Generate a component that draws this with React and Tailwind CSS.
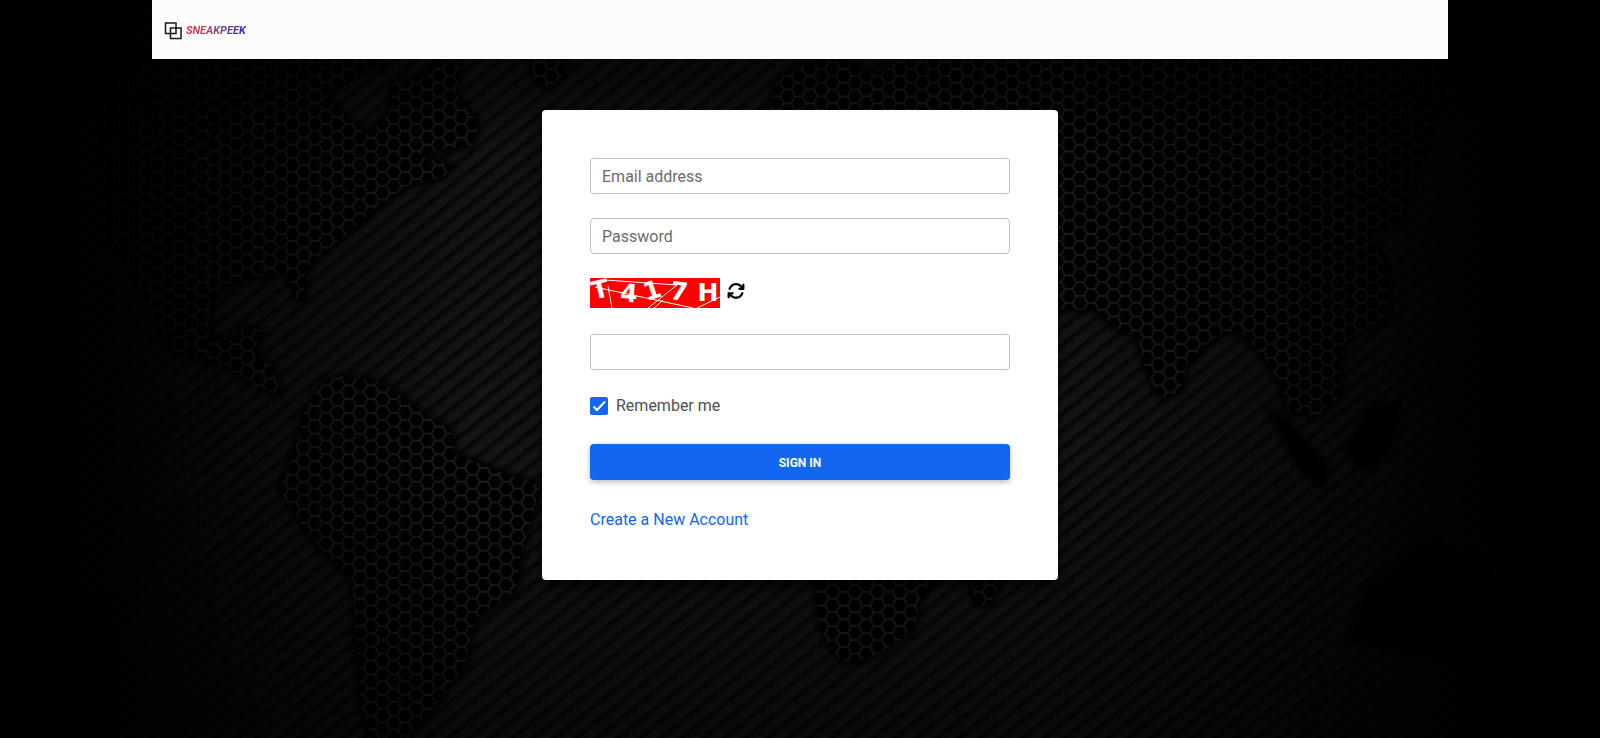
// src/pages/SignIn.jsx
//
// Sign-in page: brand bar on top, login card with captcha in the middle,
// and a dark world map drawn behind everything.

import { useState } from 'react';
import { FaArrowsRotate } from 'react-icons/fa6';

const LAND = [
  // North and Central America
  'M110 59H389L324 93L344 114L365 134L389 114L392 83L427 76L437 60L461 66L455 93L479 124L472 145L413 155L451 165L444 177L406 186L379 207L334 244L306 269L305 299L296 299L286 272L241 279L213 296L207 330L224 344L248 327L262 331L255 358L272 365L282 396L255 386L224 365L172 351L148 303L114 241L103 103Z',
  // South America
  'M304 411L322 382L340 376L383 382L401 396L429 418L451 429L454 454L490 468L540 486L536 504L522 550L515 593L476 618L465 664L440 700L415 725L408 740H372L361 707L352 579L311 539L279 489L294 454Z',
  // Greenland
  'M528 55H569L562 78L548 88L536 80Z',
  // Europe and Asia
  'M770 104L778 78L800 68L830 58L880 76L900 58H1446L1430 140L1400 224L1366 231L1387 266L1390 316L1352 337L1338 354L1341 396L1316 417L1288 410L1278 379L1264 358L1243 335L1225 331L1208 342L1187 365L1181 390L1170 397L1159 396L1145 368L1138 338L1113 326L1096 310L1050 309V120H770Z',
  // Africa and Madagascar
  'M816 570L819 623L830 648L839 659L855 663L880 653L905 637L916 623L919 601L940 570Z',
  'M970 570L975 602L987 606L996 594L1002 570Z',
];

const ISLANDS =
  'M1270 412L1284 418L1328 470L1322 486L1300 468ZM1346 450L1372 410L1398 402L1390 445L1364 470ZM1350 640L1368 590L1430 540L1490 570L1490 640L1450 655Z';

const CAPTCHA_CHARS = [
  { char: 'T', x: 10, y: 20, angle: -13 },
  { char: '4', x: 39, y: 24, angle: 4 },
  { char: '1', x: 62, y: 21, angle: -18 },
  { char: '7', x: 89, y: 22, angle: 8 },
  { char: 'H', x: 118, y: 23, angle: 0 },
];

function MapBackground() {
  return (
    <svg
      viewBox="0 0 1600 738"
      preserveAspectRatio="xMidYMid slice"
      aria-hidden="true"
      className="absolute inset-0 h-full w-full"
    >
      <defs>
        <linearGradient
          id="stripes"
          gradientUnits="userSpaceOnUse"
          x1="0"
          y1="0"
          x2="8.4"
          y2="10.4"
          spreadMethod="repeat"
        >
          <stop offset="0" stopColor="#060606" />
          <stop offset="0.35" stopColor="#141414" />
          <stop offset="0.7" stopColor="#171717" />
          <stop offset="1" stopColor="#060606" />
        </linearGradient>
        <pattern
          id="mesh"
          patternUnits="userSpaceOnUse"
          x="348.75"
          y="7"
          width="22.5"
          height="13.76"
        >
          <path
            d="M0 6.88H3.75L7.5 0H15L18.75 6.88H22.5M3.75 6.88L7.5 13.76H15L18.75 6.88"
            fill="none"
            stroke="#1f1f1f"
            strokeWidth="1.8"
          />
        </pattern>
        <linearGradient id="sideShade">
          <stop offset="0" stopColor="#000" />
          <stop offset="0.07" stopColor="#000" stopOpacity="0.9" />
          <stop offset="0.18" stopColor="#000" stopOpacity="0.45" />
          <stop offset="0.3" stopColor="#000" stopOpacity="0.05" />
          <stop offset="0.65" stopColor="#000" stopOpacity="0.05" />
          <stop offset="0.8" stopColor="#000" stopOpacity="0.45" />
          <stop offset="0.9" stopColor="#000" stopOpacity="0.85" />
          <stop offset="0.95" stopColor="#000" />
        </linearGradient>
        <linearGradient id="heightShade" x1="0" y1="0" x2="0" y2="1">
          <stop offset="0.08" stopColor="#000" stopOpacity="0.6" />
          <stop offset="0.2" stopColor="#000" stopOpacity="0.1" />
          <stop offset="0.6" stopColor="#000" stopOpacity="0" />
          <stop offset="1" stopColor="#000" stopOpacity="0.5" />
        </linearGradient>
        <filter id="soften">
          <feGaussianBlur stdDeviation="3" />
        </filter>
      </defs>

      <rect width="1600" height="738" fill="url(#stripes)" />
      <g fill="#020202" stroke="#020202" strokeWidth="6" filter="url(#soften)">
        {LAND.map((d) => (
          <path key={d} d={d} />
        ))}
        <path d={ISLANDS} />
      </g>
      {LAND.map((d) => (
        <path key={d} d={d} fill="url(#mesh)" />
      ))}
      <rect width="1600" height="738" fill="url(#sideShade)" />
      <rect width="1600" height="738" fill="url(#heightShade)" />
    </svg>
  );
}

function Logo() {
  return (
    <a href="#" aria-label="Sneakpeek home" className="flex items-center gap-1 pt-0.5">
      <svg width="18" height="18" viewBox="0 0 18 18" fill="none" stroke="#1a1a1a" strokeWidth="1.5">
        <rect x="1.5" y="1" width="10.5" height="10.5" />
        <rect x="6.5" y="6" width="10.5" height="10.5" />
      </svg>
      <span className="bg-linear-to-r from-[#ee1c25] to-[#2b1fb0] bg-clip-text text-[11px] leading-4 font-bold text-transparent italic">
        SNEAKPEEK
      </span>
    </a>
  );
}

function Captcha() {
  return (
    <svg
      width="130"
      height="30"
      viewBox="0 0 130 30"
      role="img"
      aria-label="Captcha"
      className="overflow-visible"
    >
      <rect width="130" height="30" fill="#ff0000" />
      <g
        fill="#fff"
        fontFamily="'DejaVu Sans', sans-serif"
        fontWeight="700"
        fontSize="25"
        textAnchor="middle"
      >
        {CAPTCHA_CHARS.map(({ char, x, y, angle }) => (
          <text key={char} x={x} y={y} transform={`rotate(${angle} ${x} ${y - 9})`}>
            {char}
          </text>
        ))}
      </g>
      <path
        d="M15 2L87 7L58 30M5 9L103 30M18 8L22 30M73 22L64 30M107 30L130 19"
        fill="none"
        stroke="#fff"
        strokeWidth="1"
      />
    </svg>
  );
}

function TextField({ label, showLabel = true, ...props }) {
  return (
    <input
      aria-label={label}
      placeholder={showLabel ? label : undefined}
      className="block h-9 w-full rounded border border-[#bdbdbd] bg-white px-[11px] text-base text-[#4f4f4f] outline-none placeholder:text-[#6c6c6c] focus:border-[#1266f1]"
      {...props}
    />
  );
}

function App() {
  const [remember, setRemember] = useState(true);

  return (
    <div className="relative min-h-screen bg-black font-[Roboto,sans-serif] text-base text-[#4f4f4f]">
      <MapBackground />

      <div className="relative px-3">
        <header className="mx-auto flex h-[59px] max-w-[1296px] items-center bg-[#fbfbfb] px-3">
          <Logo />
        </header>

        <main className="mx-auto mt-[51px] max-w-[516px] rounded bg-white p-12 shadow-lg shadow-black/60">
          <form onSubmit={(e) => e.preventDefault()}>
            <div className="flex flex-col gap-6">
              <TextField label="Email address" type="email" />
              <TextField label="Password" type="password" />
              <div className="flex h-8 items-start gap-[7px]">
                <Captcha />
                <button type="button" aria-label="Refresh captcha" className="mt-1 text-black">
                  <FaArrowsRotate size={18} />
                </button>
              </div>
              <TextField label="Captcha text" showLabel={false} type="text" />
              <label className="flex items-center gap-2">
                <span className="relative flex">
                  <input
                    type="checkbox"
                    checked={remember}
                    onChange={(e) => setRemember(e.target.checked)}
                    className="peer h-[18px] w-[18px] appearance-none rounded-xs border-2 border-[#757575] checked:border-[#1266f1] checked:bg-[#1266f1]"
                  />
                  <svg
                    viewBox="0 0 18 18"
                    className="pointer-events-none absolute inset-0 hidden peer-checked:block"
                    fill="none"
                    stroke="#fff"
                    strokeWidth="2"
                  >
                    <path d="M3.5 9.5L7 13L15 4.5" />
                  </svg>
                </span>
                Remember me
              </label>
            </div>

            <button
              type="submit"
              className="mt-[26px] mb-6 block h-9 w-full rounded bg-[#1266f1] pt-0.5 text-xs font-bold text-white uppercase shadow-[0_2px_5px_0_rgba(0,0,0,0.2),0_2px_10px_0_rgba(0,0,0,0.1)]"
            >
              Sign in
            </button>
            <a href="#" className="block pt-1 leading-6 text-[#1266f1]">
              Create a New Account
            </a>
          </form>
        </main>
      </div>
    </div>
  );
}

export default App;
